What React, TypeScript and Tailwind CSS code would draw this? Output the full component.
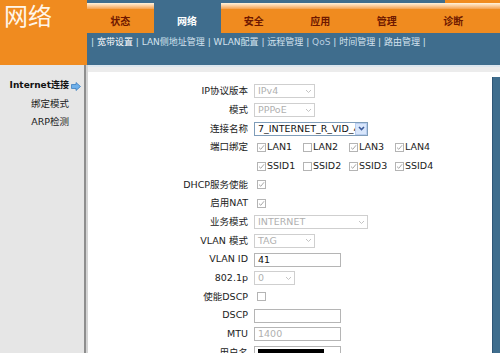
import React from "react";

const FONT = { fontFamily: '"DejaVu Sans", "Noto Sans CJK SC", sans-serif' };

function Check({ checked }: { checked?: boolean }) {
  return (
    <span className="ml-[3px] flex h-[9px] w-[9px] shrink-0 items-center justify-center border border-[#b4b4b4] bg-white">
      {checked && (
        <svg width="7" height="7" viewBox="0 0 7 7">
          <path d="M1 3.6 L2.8 5.3 L6 1.3" fill="none" stroke="#a8a8a8" strokeWidth="1" />
        </svg>
      )}
    </span>
  );
}

function CheckItem({ label, checked }: { label: string; checked?: boolean }) {
  return (
    <div className="flex w-[46px] items-center gap-[1px]">
      <Check checked={checked} />
      <span className="text-[9.5px] text-[#222]">{label}</span>
    </div>
  );
}

function Select({ value, w, enabled }: { value: string; w: string; enabled?: boolean }) {
  return (
    <div
      className={`flex h-[14px] items-center overflow-hidden border bg-white ${w} ${
        enabled ? "border-[#7f9db9]" : "border-[#cfcfcf]"
      }`}
    >
      <span
        className={`flex-1 overflow-hidden whitespace-nowrap pl-[3px] text-[9.5px] leading-[12px] ${
          enabled ? "text-[#111]" : "text-[#b0b0b0]"
        }`}
      >
        {value}
      </span>
      <span
        className={`flex h-full w-[12px] shrink-0 items-center justify-center ${
          enabled ? "border border-[#b8cdf0] bg-[#d8e6fb]" : "bg-white"
        }`}
      >
        <svg width="7" height="5" viewBox="0 0 7 5">
          <path
            d="M1 1 L3.5 3.5 L6 1"
            fill="none"
            stroke={enabled ? "#3d5b9a" : "#c4c4c4"}
            strokeWidth={enabled ? 1.6 : 1}
          />
        </svg>
      </span>
    </div>
  );
}

function Input({ value, disabled, redacted }: { value?: string; disabled?: boolean; redacted?: boolean }) {
  return (
    <div className="flex h-[14px] w-[87px] items-center border border-[#b5b5b5] bg-white pl-[3px]">
      {redacted ? (
        <span className="mt-[3px] h-[10px] w-[66px] bg-black" />
      ) : (
        <span className={`text-[9.5px] leading-[12px] ${disabled ? "text-[#b0b0b0]" : "text-[#111]"}`}>{value}</span>
      )}
    </div>
  );
}

function Row({ label, children }: { label: string; children?: React.ReactNode }) {
  return (
    <>
      <div className="flex items-center justify-end whitespace-nowrap text-[9.5px] text-[#222]">{label}</div>
      <div className="flex items-center">{children}</div>
    </>
  );
}

export default function App() {
  const tabs = ["状态", "网络", "安全", "应用", "管理", "诊断"];
  return (
    <div className="flex h-[353px] w-[500px] flex-col overflow-hidden bg-white" style={FONT}>
      {/* header */}
      <div className="flex h-[65px] shrink-0">
        <div className="w-[87px] shrink-0 bg-[#f08b1f] pl-[4px] pt-[1px]">
          <span className="text-[24px] leading-[32px] text-[#fff6ea]">网络</span>
        </div>
        <div className="flex flex-1 flex-col bg-[#3f6d8d]">
          <div className="flex h-[3px]">
            <div className="flex-1" />
            <div className="w-[55px] bg-[#f08b1f]" />
          </div>
          <div className="flex h-[30px]">
            {tabs.map((t) =>
              t === "网络" ? (
                <div key={t} className="flex w-[67px] flex-col">
                  <div className="h-[6px]" />
                  <div className="flex flex-1 items-center justify-center text-[10px] font-bold text-white">{t}</div>
                </div>
              ) : (
                <div key={t} className="flex w-[66.5px] flex-col">
                  <div className="h-[6px] bg-linear-to-b from-[#fff3dc] to-[#f3a04a]" />
                  <div className="flex flex-1 items-center justify-center bg-[#f08b1f] text-[10px] font-bold text-[#6e1800]">
                    {t}
                  </div>
                </div>
              )
            )}
            <div className="flex flex-1 flex-col">
              <div className="h-[6px] bg-linear-to-b from-[#fff3dc] to-[#f3a04a]" />
              <div className="flex-1 bg-[#f08b1f]" />
            </div>
          </div>
          <div className="flex h-[20px] items-center whitespace-pre pl-[4px] text-[9px] text-[#d3e2ee]">
            <span>| </span>
            <span className="text-white">宽带设置</span>
            <span> | LAN侧地址管理 | WLAN配置 | 远程管理 | </span>
            <span className="text-[#b9cde0]">QoS</span>
            <span> | 时间管理 | 路由管理 |</span>
          </div>
        </div>
      </div>

      {/* body */}
      <div className="flex flex-1">
        <div className="flex w-[86px] shrink-0 flex-col items-end border-r-2 border-[#8e8e8e] bg-[#e6e6e6] pr-[15px] pt-[12px]">
          <div className="mr-[-12px] flex h-[18px] items-center gap-[2px]">
            <span className="text-[9px] font-bold text-[#111]">Internet连接</span>
            <svg width="10" height="9" viewBox="0 0 10 9">
              <path
                d="M0.5 2.5 H5 V0.5 L9.5 4.5 L5 8.5 V6.5 H0.5 Z"
                fill="#6fb0ea"
                stroke="#3c7fc0"
                strokeWidth="0.8"
              />
            </svg>
          </div>
          <div className="flex h-[18px] items-center text-[9.5px] text-[#222]">绑定模式</div>
          <div className="flex h-[18px] items-center text-[9.5px] text-[#222]">ARP检测</div>
        </div>
        <div className="relative flex flex-1 flex-col border-l-2 border-[#d4d4d4]">
          <div className="h-[2px] bg-[#dce6ee]" />
          <div className="h-[5px] bg-[#ececec]" />
          <div className="flex flex-1">
            <div className="grid flex-1 auto-rows-[18.7px] grid-cols-[160px_1fr] gap-x-[6px] pt-[10px]">
              <Row label="IP协议版本">
                <Select value="IPv4" w="w-[61px]" />
              </Row>
              <Row label="模式">
                <Select value="PPPoE" w="w-[61px]" />
              </Row>
              <Row label="连接名称">
                <Select value="7_INTERNET_R_VID_41" w="w-[114px]" enabled />
              </Row>
              <Row label="端口绑定">
                <CheckItem label="LAN1" checked />
                <CheckItem label="LAN2" />
                <CheckItem label="LAN3" checked />
                <CheckItem label="LAN4" checked />
              </Row>
              <Row label="">
                <CheckItem label="SSID1" checked />
                <CheckItem label="SSID2" />
                <CheckItem label="SSID3" checked />
                <CheckItem label="SSID4" checked />
              </Row>
              <Row label="DHCP服务使能">
                <Check checked />
              </Row>
              <Row label="启用NAT">
                <Check checked />
              </Row>
              <Row label="业务模式">
                <Select value="INTERNET" w="w-[114px]" />
              </Row>
              <Row label="VLAN 模式">
                <Select value="TAG" w="w-[61px]" />
              </Row>
              <Row label="VLAN ID">
                <Input value="41" />
              </Row>
              <Row label="802.1p">
                <Select value="0" w="w-[41px]" />
              </Row>
              <Row label="使能DSCP">
                <Check />
              </Row>
              <Row label="DSCP">
                <Input />
              </Row>
              <Row label="MTU">
                <Input value="1400" disabled />
              </Row>
              <Row label="用户名">
                <Input redacted />
              </Row>
            </div>
            <div className="mt-[5px] w-[8px] shrink-0 border-l border-[#2f5676] bg-[#3f6d8d]" />
          </div>
        </div>
      </div>
    </div>
  );
}
